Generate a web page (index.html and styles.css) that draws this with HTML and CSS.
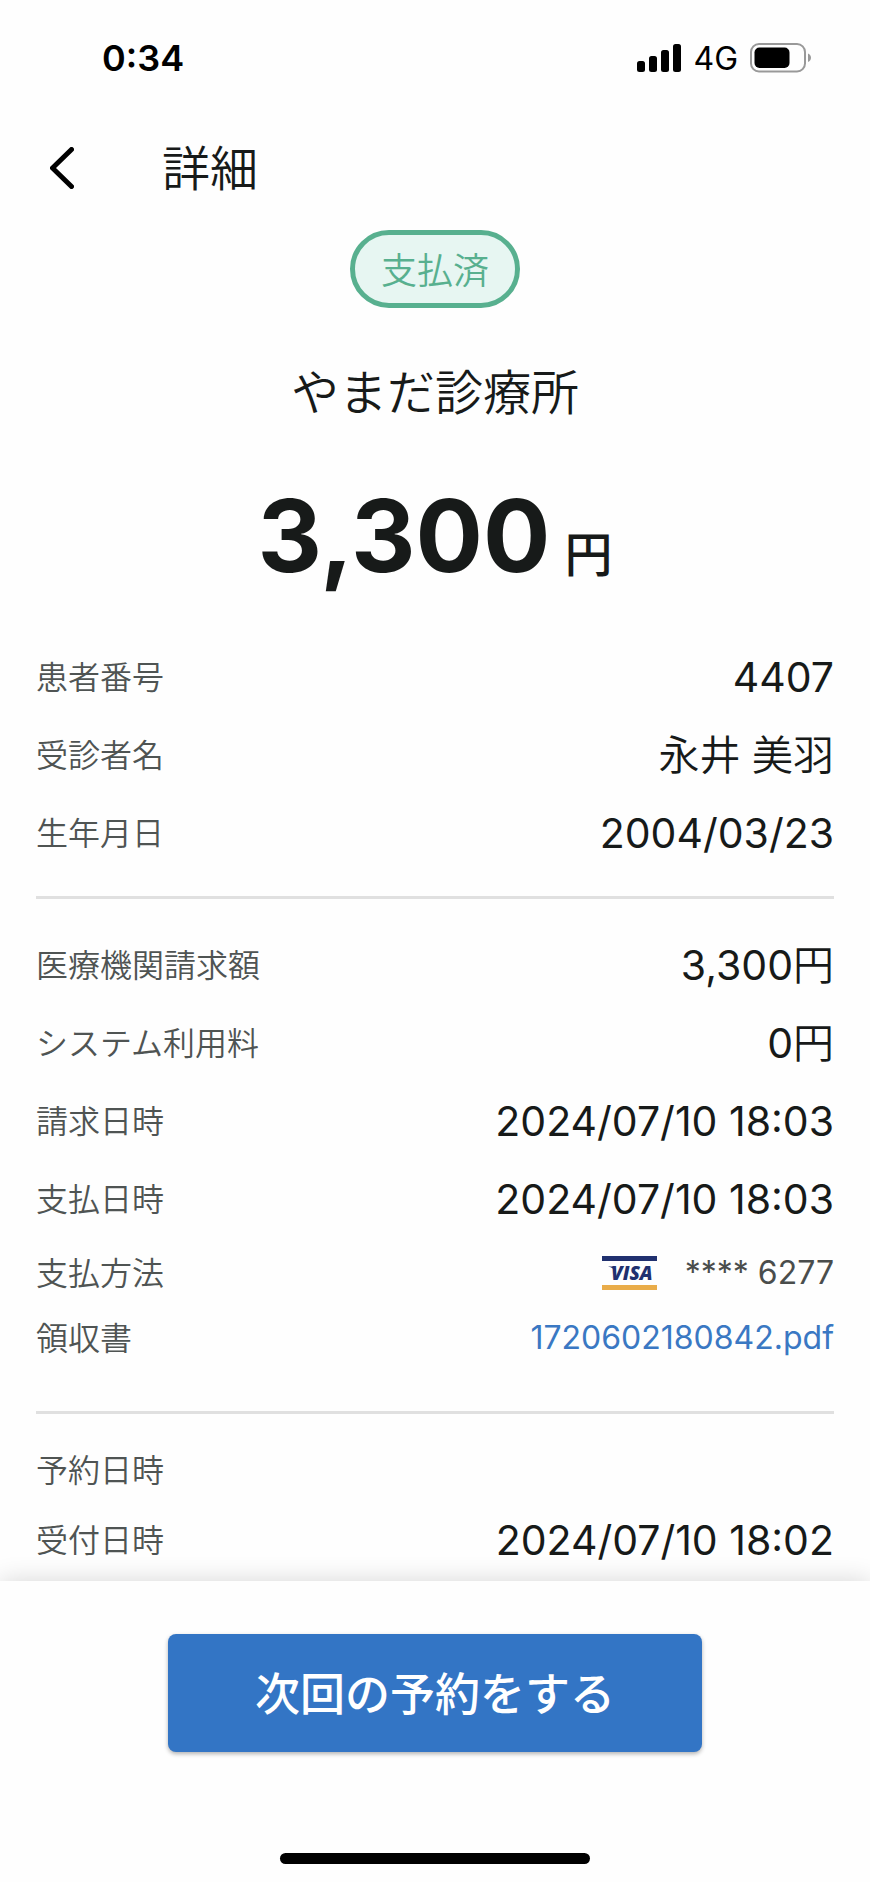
FILE: index.html
```html
<!DOCTYPE html>
<html lang="ja">
<head>
    <meta charset="UTF-8">
    <meta name="viewport" content="width=device-width, initial-scale=1.0">
    <title>詳細</title>
    <link rel="stylesheet" href="styles.css">
</head>
<body>
    <div class="status-bar">
        <span class="time">0:34</span>
        <div class="status-icons">
            <svg class="signal" width="44" height="28" viewBox="0 0 44 28">
                <rect x="0" y="17" width="8" height="11" rx="2.5"/>
                <rect x="12" y="12" width="8" height="16" rx="2.5"/>
                <rect x="24" y="6" width="8" height="22" rx="2.5"/>
                <rect x="36" y="0" width="8" height="28" rx="2.5"/>
            </svg>
            <span class="network">4G</span>
            <svg class="battery" width="62" height="30" viewBox="0 0 62 30">
                <rect x="1" y="1" width="54" height="27.500" rx="8" fill="none" stroke="#999" stroke-width="2"/>
                <rect x="4.500" y="4.500" width="35" height="20.500" rx="5"/>
                <path d="M58 10.500c4 1.500 4 7 0 8.500z" fill="#999"/>
            </svg>
        </div>
    </div>

    <header class="header">
        <button class="back" type="button" aria-label="戻る">
            <svg width="24" height="42" viewBox="0 0 24 42">
                <path d="M21.500 2.500L2.500 21l19 18.500" fill="none" stroke="#000" stroke-width="5" stroke-linecap="round" stroke-linejoin="round"/>
            </svg>
        </button>
        <h1>詳細</h1>
    </header>

    <main class="content">
        <div class="summary">
            <span class="badge">支払済</span>
            <h2 class="clinic">やまだ診療所</h2>
            <p class="amount">3,300<span class="yen">円</span></p>
        </div>

        <dl class="list">
            <div class="row"><dt>患者番号</dt><dd>4407</dd></div>
            <div class="row"><dt>受診者名</dt><dd class="ja">永井 美羽</dd></div>
            <div class="row"><dt>生年月日</dt><dd>2004/03/23</dd></div>
        </dl>

        <dl class="list">
            <div class="row"><dt>医療機関請求額</dt><dd>3,300<span class="ja">円</span></dd></div>
            <div class="row"><dt>システム利用料</dt><dd>0<span class="ja">円</span></dd></div>
            <div class="row"><dt>請求日時</dt><dd>2024/07/10 18:03</dd></div>
            <div class="row"><dt>支払日時</dt><dd>2024/07/10 18:03</dd></div>
            <div class="row short">
                <dt>支払方法</dt>
                <dd class="small">
                    <svg class="visa" width="55" height="34" viewBox="0 0 55 34">
                        <rect width="55" height="5" fill="#20306f"/>
                        <rect y="29" width="55" height="5" fill="#e9ac49"/>
                        <path d="M6 10.500h6l2 5c-2-2.500-4-4-8-5z" fill="#20306f"/>
                        <text class="visa-text" x="9" y="24">VISA</text>
                    </svg>
                    <span>**** 6277</span>
                </dd>
            </div>
            <div class="row shorter">
                <dt>領収書</dt>
                <dd class="small"><a href="#">1720602180842.pdf</a></dd>
            </div>
        </dl>

        <dl class="list">
            <div class="row short"><dt>予約日時</dt><dd></dd></div>
            <div class="row short"><dt>受付日時</dt><dd>2024/07/10 18:02</dd></div>
        </dl>
    </main>

    <footer class="footer">
        <button class="reserve" type="button">次回の予約をする</button>
        <div class="home-bar"></div>
    </footer>
</body>
</html>
```
FILE: styles.css
```css
*{
    margin: 0;
    padding: 0;
    box-sizing: border-box;
}
body{
    min-height: 100vh;
    display: flex;
    flex-direction: column;
    background: #fefefe;
    color: #171a19;
    font-family: Inter, "Noto Sans CJK JP", sans-serif;
    font-weight: 350;
}

/* status bar */
.status-bar{
    height: 116px;
    padding: 0 58px 0 102px;
    display: flex;
    align-items: center;
    justify-content: space-between;
    color: #000;
}
.time{
    font-size: 36px;
    font-weight: 600;
}
.status-icons{
    display: flex;
    align-items: center;
    gap: 12px;
}
.network{
    font-size: 32px;
    font-weight: 400;
}

/* header */
.header{
    height: 104px;
    padding: 0 36px;
    display: flex;
    align-items: center;
    gap: 74px;
}
.back{
    width: 52px;
    height: 52px;
    display: flex;
    align-items: center;
    justify-content: center;
    border: none;
    background: none;
    cursor: pointer;
}
.header h1{
    padding-top: 2px;
    font-size: 48px;
    font-weight: 350;
    line-height: 64px;
}

.content{
    flex: 1;
    padding: 10px 36px 4px;
}
.summary{
    height: 408px;
    display: flex;
    flex-direction: column;
    align-items: center;
}
.badge{
    height: 78px;
    padding: 0 26px 2px;
    display: flex;
    align-items: center;
    border: 5px solid #58b08f;
    border-radius: 39px;
    background: #e7f6f2;
    color: #58b08f;
    font-size: 36px;
}
.clinic{
    margin-top: 53px;
    font-size: 48px;
    font-weight: 350;
    line-height: 64px;
}
.amount{
    margin-top: 51px;
    font-size: 100px;
    font-weight: 700;
    line-height: 120px;
}
.yen{
    margin-left: 14px;
    font-size: 48px;
    font-weight: 500;
}

/* detail rows */
.list + .list{
    margin-top: 24px;
    padding-top: 27px;
    border-top: 3px solid #e0e0e0;
}
.list + .list:last-child{
    margin-top: 43px;
    padding-top: 21px;
}
.row{
    height: 78px;
    display: flex;
    align-items: center;
    justify-content: space-between;
}
.row.short{
    height: 70px;
}
.row.shorter{
    height: 60px;
}
.row dt{
    padding-top: 2px;
    color: #4f5453;
    font-size: 32px;
    line-height: 48px;
}
.row dd{
    font-size: 41px;
    font-weight: 400;
    line-height: 48px;
}
.row .ja{
    font-weight: 350;
}
.row dd.small{
    display: flex;
    align-items: center;
    gap: 28px;
    color: #4a4d4c;
    font-size: 32px;
}
.row a{
    color: #3a78c3;
    text-decoration: none;
}
.visa-text{
    fill: #20306f;
    font-family: "Open Sans", sans-serif;
    font-size: 19px;
    font-style: italic;
    font-weight: 800;
}

/* bottom area */
.footer{
    padding: 53px 36px 18px;
    display: flex;
    flex-direction: column;
    align-items: center;
    background: #fefefe;
    box-shadow: 0 0 24px rgba(0, 0, 0, 0.16);
}
.reserve{
    width: 67%;
    height: 118px;
    padding-bottom: 4px;
    border: none;
    border-radius: 8px;
    background: #3375c5;
    box-shadow: 0 2px 4px rgba(0, 0, 0, 0.3);
    color: #fff;
    font-family: inherit;
    font-size: 45px;
    font-weight: 500;
    cursor: pointer;
}
.home-bar{
    width: 310px;
    height: 11px;
    margin-top: 101px;
    border-radius: 6px;
    background: #000;
}
```
